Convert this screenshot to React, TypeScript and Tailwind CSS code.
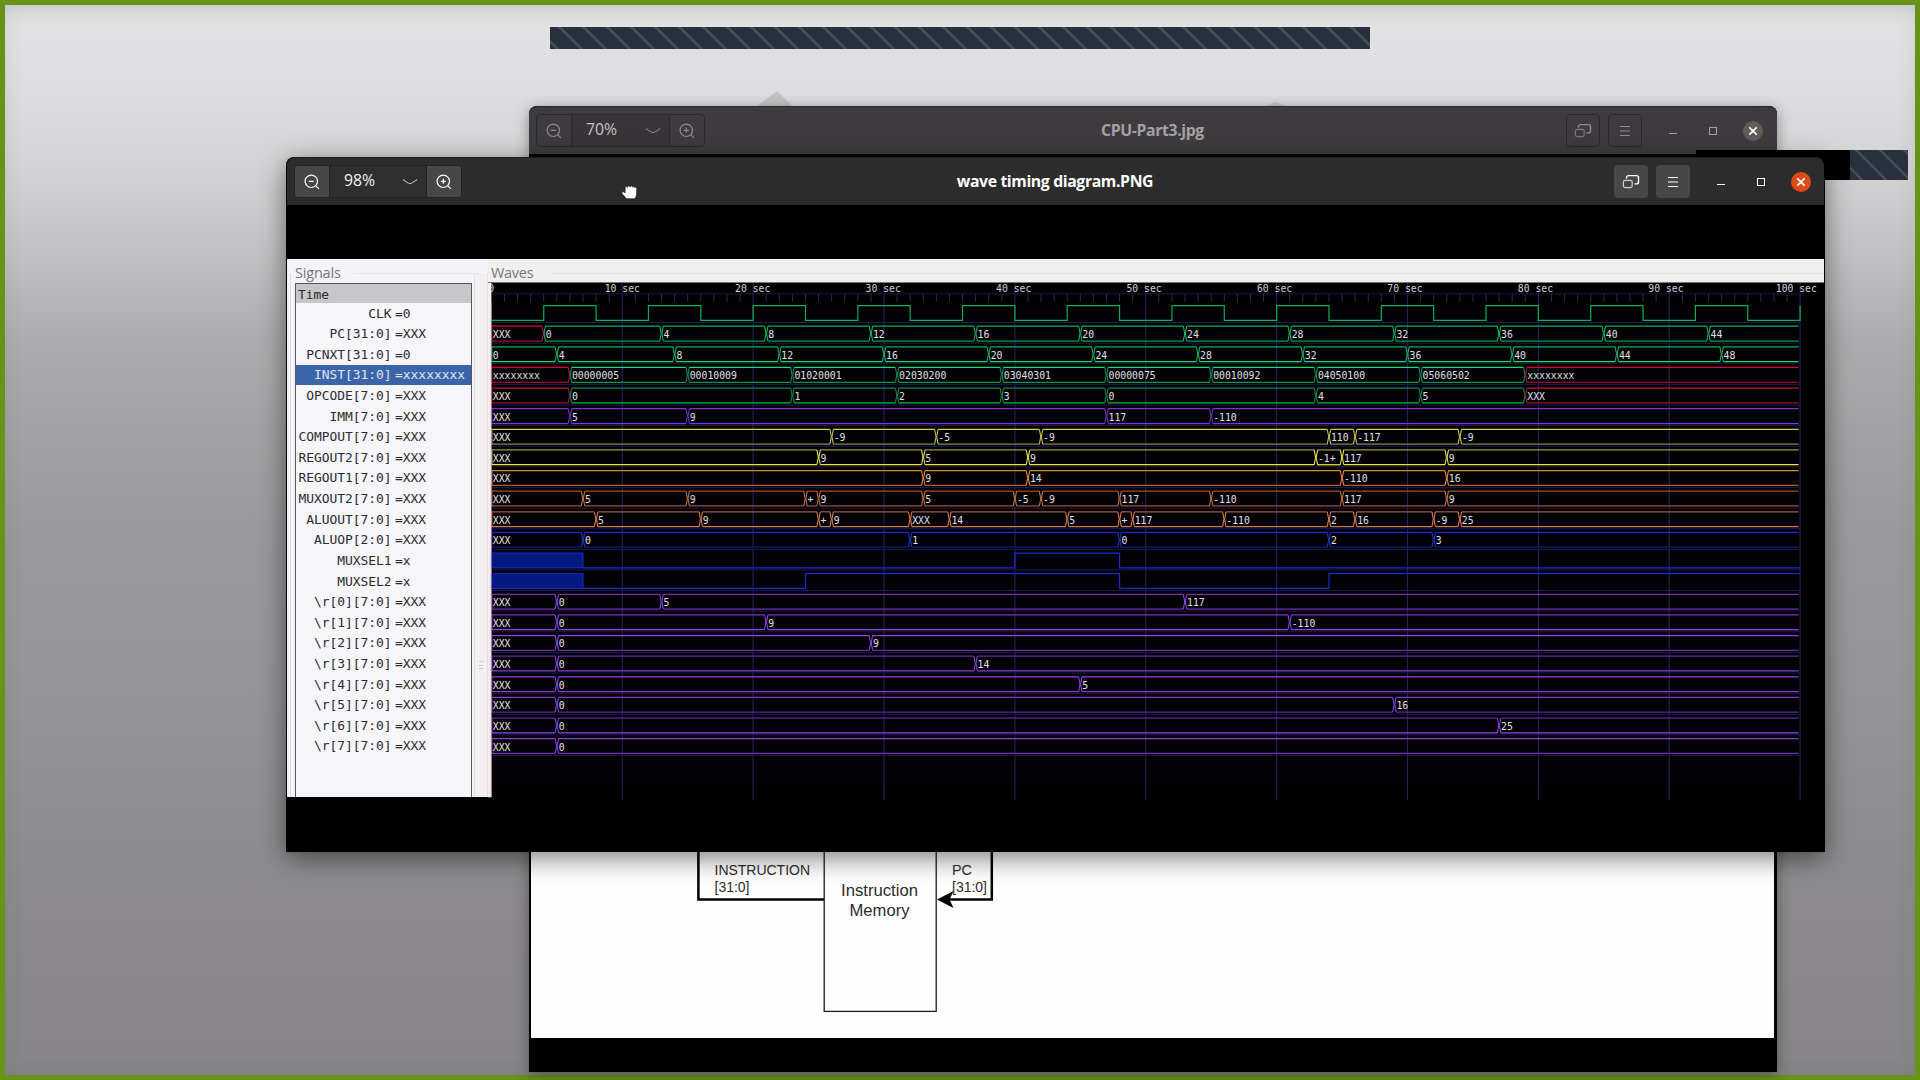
import React from "react";

type Seg = [number, string, boolean?];
type Bus = { kind: "bus"; top: string; bot: string; cross: string; segs: Seg[] };
type Bit = { kind: "bit"; color: string; levels: [number, "0" | "1" | "x"][] };
type Signal = { name: string; value: string; wave: Bus | Bit };

const X0 = 3.4;
const STEP = 13.087;
const ROW = 20.62;
const TOP0 = 22.6;
const tx = (t: number) => X0 + t * STEP;

const bus = (top: string, bot: string, cross: string, segs: Seg[]): Bus => ({ kind: "bus", top, bot, cross, segs });
const clock: [number, "0" | "1" | "x"][] = [[0, "0"]];
for (let t = 4; t <= 100; t += 4) clock.push([t, (t / 4) % 2 === 1 ? "1" : "0"]);

const counter = (start: number, first: number, last: number): Seg[] => {
  const out: Seg[] = [];
  for (let v = first, t = start; v <= last; v += 4, t += 8) out.push([t, String(v)]);
  return out;
};

const reg = (i: number, top: string, bot: string, extra: Seg[]): Signal => ({
  name: `\\r[${i}][7:0]`,
  value: "XXX",
  wave: bus(top, bot, "#8b3fd9", [[0, "XXX"], [5, "0"], ...extra]),
});

const SIGNALS: Signal[] = [
  { name: "CLK", value: "0", wave: { kind: "bit", color: "#0fae58", levels: clock } },
  { name: "PC[31:0]", value: "XXX", wave: bus("#10b058", "#009e3c", "#18b058", [[0, "XXX", true], [4, "0"], ...counter(13, 4, 44)]) },
  { name: "PCNXT[31:0]", value: "0", wave: bus("#06b24c", "#15e06a", "#18b058", [[0, "0"], [5, "4"], ...counter(14, 8, 48)]) },
  {
    name: "INST[31:0]", value: "xxxxxxxx",
    wave: bus("#12e065", "#08964f", "#158a4c", [[0, "xxxxxxxx", true], [6, "00000005"], [15, "00010009"], [23, "01020001"], [31, "02030200"], [39, "03040301"], [47, "00000075"], [55, "00010092"], [63, "04050100"], [71, "05060502"], [79, "xxxxxxxx", true]]),
  },
  {
    name: "OPCODE[7:0]", value: "XXX",
    wave: bus("#118a4a", "#06be3c", "#158044", [[0, "XXX", true], [6, "0"], [23, "1"], [31, "2"], [39, "3"], [47, "0"], [63, "4"], [71, "5"], [79, "XXX", true]]),
  },
  { name: "IMM[7:0]", value: "XXX", wave: bus("#842fd0", "#8034e6", "#6e32ae", [[0, "XXX"], [6, "5"], [15, "9"], [47, "117"], [55, "-110"]]) },
  { name: "COMPOUT[7:0]", value: "XXX", wave: bus("#d8cf3c", "#8c8650", "#c4c044", [[0, "XXX"], [26, "-9"], [34, "-5"], [42, "-9"], [64, "110"], [66, "-117"], [74, "-9"]]) },
  { name: "REGOUT2[7:0]", value: "XXX", wave: bus("#9c9642", "#ece82e", "#e8e04a", [[0, "XXX"], [25, "9"], [33, "5"], [41, "9"], [63, "-1+"], [65, "117"], [73, "9"]]) },
  { name: "REGOUT1[7:0]", value: "XXX", wave: bus("#d4901e", "#b85c28", "#ec8240", [[0, "XXX"], [33, "9"], [41, "14"], [65, "-110"], [73, "16"]]) },
  {
    name: "MUXOUT2[7:0]", value: "XXX",
    wave: bus("#a25022", "#9e5432", "#c47034", [[0, "XXX"], [7, "5"], [15, "9"], [24, "+"], [25, "9"], [33, "5"], [40, "-5"], [42, "-9"], [48, "117"], [55, "-110"], [65, "117"], [73, "9"]]),
  },
  {
    name: "ALUOUT[7:0]", value: "XXX",
    wave: bus("#a45c32", "#ca7c48", "#da7844", [[0, "XXX"], [8, "5"], [16, "9"], [25, "+"], [26, "9"], [32, "XXX"], [35, "14"], [44, "5"], [48, "+"], [49, "117"], [56, "-110"], [64, "2"], [66, "16"], [72, "-9"], [74, "25"]]),
  },
  { name: "ALUOP[2:0]", value: "XXX", wave: bus("#1c20ee", "#0c1c84", "#1e34bc", [[0, "XXX"], [7, "0"], [32, "1"], [48, "0"], [64, "2"], [72, "3"]]) },
  { name: "MUXSEL1", value: "x", wave: { kind: "bit", color: "#1e28d2", levels: [[0, "x"], [7, "0"], [40, "1"], [48, "0"]] } },
  { name: "MUXSEL2", value: "x", wave: { kind: "bit", color: "#1e28d2", levels: [[0, "x"], [7, "0"], [24, "1"], [48, "0"], [64, "1"]] } },
  reg(0, "#7630a4", "#7630ae", [[13, "5"], [53, "117"]]),
  reg(1, "#8632bc", "#963ce4", [[21, "9"], [61, "-110"]]),
  reg(2, "#943ee2", "#682e9e", [[29, "9"]]),
  reg(3, "#602e90", "#8c3ad2", [[37, "14"]]),
  reg(4, "#9440ec", "#8c38ce", [[45, "5"]]),
  reg(5, "#8638c8", "#602a92", [[69, "16"]]),
  reg(6, "#622a98", "#9644ec", [[77, "25"]]),
  reg(7, "#8e3eda", "#7630ac", []),
];

const RED = { top: "#d8062f", bot: "#980c2c", cross: "#981e36" };

function BusWave({ wave, y }: { wave: Bus; y: number }) {
  const b = y + 14.8;
  const mid = y + 7.4;
  return (
    <g fill="none">
      {wave.segs.map(([t, label, bad], i) => {
        const last = i === wave.segs.length - 1;
        const x1 = tx(t);
        const x2 = last ? tx(100) - 1.5 : tx(wave.segs[i + 1][0]);
        const c = bad ? RED : wave;
        const l = i === 0 ? x1 + 0.5 : x1 + 1.7;
        const r = last ? x2 : x2 - 1.7;
        return (
          <g key={i}>
            <path d={`M${l} ${y}H${r}`} stroke={c.top} strokeWidth="1.25" />
            <path d={`M${l} ${b}H${r}`} stroke={c.bot} strokeWidth="1.25" />
            {i === 0 ? (
              <path d={`M${l} ${y}V${b}`} stroke={c.cross} />
            ) : (
              <path d={`M${l} ${y}L${x1 + 0.3} ${mid}L${l} ${b}`} stroke={c.cross} strokeWidth="1.1" />
            )}
            {!last && <path d={`M${r} ${y}L${x2 - 0.3} ${mid}L${r} ${b}`} stroke={c.cross} strokeWidth="1.1" />}
            <text x={x1 + (i === 0 ? 1.4 : 2)} y={y + 11.9} fill="#e0e0e0" fontSize="10.8" textLength={label.length * 5.9} lengthAdjust="spacingAndGlyphs">
              {label}
            </text>
          </g>
        );
      })}
    </g>
  );
}

function BitWave({ wave, y }: { wave: Bit; y: number }) {
  const b = y + 14.8;
  let d = "";
  const fills: React.ReactNode[] = [];
  wave.levels.forEach(([t, v], i) => {
    const end = i + 1 < wave.levels.length ? tx(wave.levels[i + 1][0]) : tx(100);
    if (v === "x") {
      fills.push(<rect key={i} x={tx(t)} y={y} width={end - tx(t)} height={b - y} fill="#041a82" stroke={wave.color} />);
      d += `M${end} ${b}`;
      return;
    }
    const yy = v === "1" ? y : b;
    d += `${d ? "L" : "M"}${tx(t)} ${yy}L${end} ${yy}`;
  });
  return (
    <g>
      {fills}
      <path d={d} fill="none" stroke={wave.color} strokeWidth="1.2" />
    </g>
  );
}

function WaveChart() {
  const tens = Array.from({ length: 10 }, (_, i) => i + 1);
  return (
    <svg width="1336" height="518" viewBox="0 0 1336 518" className="block bg-black" fontFamily="'DejaVu Sans Mono', monospace">
      <rect x="3" y="20" width="1309" height="480" fill="#010106" />
      {tens.map((n) => (
        <path key={n} d={`M${tx(n * 10)} 0V517`} stroke="#23214f" strokeWidth="1.2" />
      ))}
      <path d={`M3 10.8H${tx(100)}`} stroke="#17184f" />
      {Array.from({ length: 99 }, (_, i) => i + 1).filter((i) => i % 10).map((i) => (
        <path key={i} d={`M${tx(i)} 11V19`} stroke="#2a2a4c" />
      ))}
      <text x="-2" y="9" fontSize="10.8" fill="#d0d0d4" textLength="5.9" lengthAdjust="spacingAndGlyphs" transform="translate(2.2 0)">0</text>
      <rect x="0" y="0" width="3.4" height="518" fill="#f7efef" />
      {tens.map((n) => (
        <text key={n} x={134.3 + 130.45 * (n - 1)} y="9" fontSize="10.8" fill="#d0d0d4" textAnchor="middle" textLength={n === 10 ? 41 : 35.3} lengthAdjust="spacingAndGlyphs">
          {`${n * 10} sec`}
        </text>
      ))}
      {SIGNALS.map((s, i) => {
        const y = TOP0 + i * ROW;
        return (
          <g key={s.name}>
            <path d={`M3 ${y + 16.9}H${tx(100)}`} stroke="#171b52" />
            {s.wave.kind === "bus" ? <BusWave wave={s.wave} y={y} /> : <BitWave wave={s.wave} y={y} />}
          </g>
        );
      })}
      <path d="M3.2 20V514" stroke="#d8a0b0" strokeWidth="0.8" />
      <rect x="0" y="514.3" width="4" height="4" fill="#000" />
    </svg>
  );
}

function ZoomIcon({ plus }: { plus?: boolean }) {
  return (
    <svg width="16" height="16" viewBox="0 0 16 16" fill="none" stroke="currentColor" strokeWidth="1.2">
      <circle cx="7.3" cy="7.3" r="6.2" />
      <path d="M4.8 7.3h5M11.9 11.9l3 3" />
      {plus && <path d="M7.3 4.8v5" />}
    </svg>
  );
}

function GalleryIcon() {
  return (
    <svg width="18" height="16" viewBox="0 0 18 16" fill="none" stroke="currentColor" strokeWidth="1.2">
      <path d="M4.5 4.4V3.6a2 2 0 0 1 2-2h8a2 2 0 0 1 2 2v4.3a2 2 0 0 1-2 2h-2" strokeWidth="1.4" />
      <rect x="1.4" y="6.4" width="8.8" height="7.2" rx="1.8" opacity="0.75" />
    </svg>
  );
}

function MenuIcon() {
  return (
    <svg width="12" height="12" viewBox="0 0 12 12" stroke="currentColor" strokeWidth="1.1">
      <path d="M1 1.5h10M1 6h10M1 10.5h10" />
    </svg>
  );
}

function HeaderBar({ zoom, title, active }: { zoom: string; title: string; active: boolean }) {
  const button = active ? "bg-[#474747] text-white" : "border border-[#2b292b] text-[#8e8c8e]";
  return (
    <div
      className={
        "relative flex h-[48px] shrink-0 items-center rounded-t-[8px] border-t font-['Open_Sans',sans-serif] " +
        (active ? "border-[#1c1c1c] bg-[#2c2c2c] text-white" : "border-[#2a282a] bg-[#3e3b3e] text-[#a3a1a3]")
      }
    >
      <div className={"ml-[7px] flex h-[33px] overflow-hidden rounded-[4px] border " + (active ? "w-[168px] border-[#242424]" : "w-[169px] border-[#2b292b]")}>
        <div className={"flex w-[34px] items-center justify-center " + (active ? "bg-[#474747]" : "text-[#8e8c8e]")}>
          <ZoomIcon />
        </div>
        <div className={"flex flex-1 items-center justify-between border-x pl-[14px] pr-[8px] " + (active ? "border-[#1f1f1f] bg-[#2f2f2f]" : "border-[#2b292b] bg-[#373537]")}>
          <span className={"-mt-px text-[15.8px] leading-none " + (active ? "text-[#f2f2f2]" : "text-[#c6c4c6]")}>{zoom}</span>
          <svg width="16" height="8" viewBox="0 0 16 8" fill="none" stroke={active ? "#bdbdbd" : "#888688"} strokeWidth="1.1">
            <path d="M.8 1.500C4 3.200 5.500 5.600 8 5.600S12 3.200 15.200 1.500" />
          </svg>
        </div>
        <div className={"flex w-[34px] items-center justify-center " + (active ? "bg-[#474747]" : "text-[#8e8c8e]")}>
          <ZoomIcon plus />
        </div>
      </div>
      <div className="pointer-events-none absolute inset-0 flex items-center justify-center pr-px text-[15.8px] font-bold tracking-[-0.38px]">{title}</div>
      <div className={"ml-auto flex items-center " + (active ? "mr-[13px]" : "mr-[14px]")}>
        <div className={"flex h-[33px] w-[34px] items-center justify-center rounded-[4px] " + button}>
          <GalleryIcon />
        </div>
        <div className={"ml-[8px] flex h-[33px] w-[34px] items-center justify-center rounded-[4px] " + button}>
          <MenuIcon />
        </div>
        <div className="ml-[27px] mt-[5px] h-px w-[8px] bg-current" />
        <div className="ml-[32px] h-[8px] w-[8px] border border-current" />
        <div className={"ml-[26px] flex h-[20px] w-[20px] items-center justify-center rounded-full text-white " + (active ? "bg-[#df4a1a]" : "bg-[#5f5c5a]")}>
          <svg width="10" height="10" viewBox="0 0 10 10" stroke="currentColor" strokeWidth="1.7">
            <path d="M1.3 1.3l7.4 7.4M8.7 1.3L1.3 8.7" />
          </svg>
        </div>
      </div>
    </div>
  );
}

function CpuDiagram() {
  return (
    <svg width="1243" height="186" viewBox="531 852 1243 186" className="block bg-[#fefefe]" fontFamily="'Liberation Sans', Arial, sans-serif" fill="#2d2d2d">
      <path d="M698.4 852V899.5H824M991.8 852V899.5H948" fill="none" stroke="#000" strokeWidth="2.5" />
      <rect x="824.2" y="800" width="112" height="211.4" fill="none" stroke="#1c1c1c" strokeWidth="1.3" />
      <path d="M937 899.5L953.5 891L949.5 899.5L953.5 908Z" fill="#000" />
      <g fontSize="15.2">
        <text x="714.5" y="875" textLength="95.5" lengthAdjust="spacingAndGlyphs">INSTRUCTION</text>
        <text x="714.5" y="892" textLength="35" lengthAdjust="spacingAndGlyphs">[31:0]</text>
        <text x="952" y="875" textLength="20" lengthAdjust="spacingAndGlyphs">PC</text>
        <text x="952" y="892" textLength="35" lengthAdjust="spacingAndGlyphs">[31:0]</text>
      </g>
      <g fontSize="16.4" textAnchor="middle">
        <text x="879.5" y="896" textLength="77" lengthAdjust="spacingAndGlyphs">Instruction</text>
        <text x="879.5" y="915.7" textLength="60" lengthAdjust="spacingAndGlyphs">Memory</text>
      </g>
    </svg>
  );
}

function SignalList() {
  return (
    <div className="relative ml-[8px] mt-[24px] h-[514px] w-[177px] border-x border-t border-[#55555a] bg-[#f5f5fa] font-['DejaVu_Sans_Mono',monospace] text-[12.95px] text-[#2a2c30]">
      <div className="flex h-[19px] items-center bg-[#c7c7c9] pl-[2px] pt-[2px]">Time</div>
      {SIGNALS.map((s) => {
        const selected = s.name.startsWith("INST");
        return (
          <div key={s.name} className={"flex h-[20.62px] items-center whitespace-pre pt-[1.5px] leading-none " + (selected ? "bg-[#3c64a8] text-[#dfe6f2]" : "")}>
            <span className="w-[95.5px] shrink-0 text-right tracking-[-0.04px]">{s.name}</span>
            <span className="ml-[3.5px]">={s.value}</span>
          </div>
        );
      })}
    </div>
  );
}

export default function App() {
  return (
    <div className="relative h-[1080px] w-[1920px] overflow-hidden bg-[#679318]">
      <div className="absolute inset-[5px] overflow-hidden bg-[linear-gradient(180deg,#d6d8d9_0px,#e2e1e3_22px,#dedde0_70px,#d4d3d5_160px,#c2c2c4_245px,#adadaf_330px,#a2a2a4_420px,#99989b_540px,#939295_720px,#8b898c_900px,#868487_1070px)]">
        <svg width="1910" height="1070" viewBox="5 5 1910 1070" className="block">
          <path d="M757 106L777 91L792 106Z" fill="#c2c2c4" />
          <path d="M1266 106L1275 102L1287 106Z" fill="#c4c4c6" />
        </svg>
      </div>
      <div className="absolute inset-[5px] shadow-[inset_0_0_16px_rgba(90,100,100,0.16)]" />
      <div className="absolute left-[550px] top-[27px] h-[22px] w-[820px] bg-[#28303d] bg-[repeating-linear-gradient(45deg,transparent_0px,transparent_3.8px,#454d59_4.3px,#454d59_6.4px,transparent_6.9px,transparent_16.97px)]" />

      <div className="absolute left-[529px] top-[106px] flex h-[966px] w-[1248px] flex-col rounded-t-[8px] bg-black shadow-[0_3px_14px_rgba(0,0,0,0.38)]">
        <HeaderBar zoom="70%" title="CPU-Part3.jpg" active={false} />
        <div className="mt-auto mb-[34px] ml-[2px]">
          <CpuDiagram />
        </div>
      </div>

      <div className="absolute left-[1696px] top-[150px] flex h-[30px] w-[212px] bg-black">
        <div className="ml-auto h-full w-[58px] bg-[#28303d] bg-[repeating-linear-gradient(45deg,transparent_0px,transparent_7px,#454d59_7.5px,#454d59_9.6px,transparent_10.1px,transparent_16.97px)]" />
      </div>

      <div className="absolute left-[286px] top-[157px] flex h-[695px] w-[1539px] flex-col rounded-t-[8px] bg-black px-px shadow-[0_6px_26px_rgba(0,0,0,0.5)]">
        <HeaderBar zoom="98%" title="wave timing diagram.PNG" active />
        <div className="mt-[54px] flex h-[542px]">
          <div className="flex h-[538px] w-[201px] bg-[#f4f4f8]">
            <div className="relative flex w-full">
              <span className="absolute left-[8px] top-[3px] font-['Open_Sans',sans-serif] text-[14.5px] leading-[22px] tracking-[-0.2px] text-[#77777b]">Signals</span>
              <div className="absolute left-[66px] right-[8px] top-[14px] h-px bg-[#e6e5ea]" />
              <div className="absolute left-[3px] top-[14px] bottom-0 w-px bg-[#dddde2]" />
              <SignalList />
              <div className="ml-auto mt-[14px] flex w-[14px] items-center justify-center border-x border-[#e2dfe2] bg-[#f3f0f2]">
                <div className="mt-[260px] flex h-[8px] w-[4px] flex-col justify-between border-y border-[#cfcccf]">
                  <div className="mt-[2.500px] h-px bg-[#cfcccf]" />
                </div>
              </div>
            </div>
          </div>
          <div className="flex w-[1336px] flex-col">
            <div className="relative h-[24px] shrink-0 border-b border-[#77777a] bg-[#f0efee]">
              <span className="absolute left-[3px] top-[3px] font-['Open_Sans',sans-serif] text-[14.5px] leading-[22px] tracking-[-0.3px] text-[#77777b]">Waves</span>
              <div className="absolute left-[64px] right-0 top-[14px] h-px bg-[#e2e0e8]" />
            </div>
            <WaveChart />
          </div>
        </div>
      </div>

      <svg className="absolute left-[621px] top-[184px]" width="17" height="16" viewBox="0 0 17 16" fill="#fff" stroke="#222" strokeWidth="0.7">
        <path d="M5.2 14.8C4.2 12.8 1.6 10.6 1 9.3c-.4-1.2.9-2.1 2.1-1.2l1 .8V3.6c0-1.5 2.1-1.5 2.2-.1C6.4 1.5 9 1.4 9.1 3c.2-1.5 2.6-1.4 2.7.3.3-1.2 2-1 2.1.6.3-.9 1.8-.7 1.8.8 0 4.3-.1 7.6-1.7 10.1Z" />
      </svg>
    </div>
  );
}
